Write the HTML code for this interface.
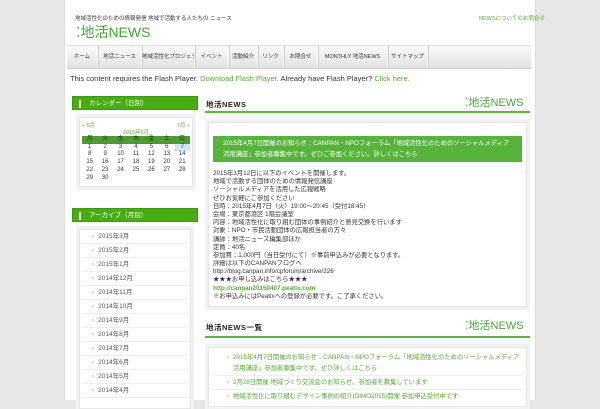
<!DOCTYPE html>
<html><head><meta charset="utf-8"><style>
*{margin:0;padding:0;box-sizing:border-box}
body{width:600px;height:400px;overflow:hidden;background:#e6e6e6;font-family:"Liberation Sans","Noto Sans CJK JP",sans-serif;font-size:7px;color:#333;position:relative}
.wrap{position:absolute;left:64px;top:0;width:472px;height:400px;background:#fff;border-left:1px solid #ddd;border-right:1px solid #ddd}
.a{position:absolute}
a{color:#5aa63a}
.logo{font-size:14px;color:#4aa23a;letter-spacing:0}
.nav{left:67px;top:45px;width:464px;height:24px;background:linear-gradient(#fafafa,#e2e2e2);border-top:1px solid #ddd;border-bottom:1px solid #ccc;display:flex}
.nav div{border-right:1px solid #fff;box-shadow:1px 0 0 #ccc;line-height:22px;font-size:5.5px;color:#333;white-space:nowrap;overflow:hidden;text-align:center;flex:none}
.sh{background:#4bab17;color:#fff;height:14px;line-height:14px;padding-left:16px;font-size:6.5px;border:1px solid #3f9612}
.sh:before{content:"";position:absolute;left:6px;top:3px;width:2px;height:8px;background:#e8f8c8}
.box{background:#fff;border:1px solid #e6e6e6;box-shadow:0 0 0 3px #f2f2f2}
table{border-collapse:collapse;width:100%}
td{text-align:center;font-size:6px;height:7.7px;line-height:7.7px}
.li{height:14px;line-height:14px;border-bottom:1px solid #eee;padding-left:10px;font-size:6.5px;color:#555}
.li:before{content:"›";color:#999;margin-right:4px}
.ttl{font-weight:bold;font-size:7.5px;letter-spacing:.5px;color:#222}
.gl{height:2px;background:#5cb83c}
.txt div{height:8.2px;line-height:8.2px;white-space:nowrap;overflow:hidden}
.nl{padding-left:20px;position:relative;font-size:6.3px}
.nl:before{content:"›";position:absolute;left:14px;color:#999}
</style></head><body>
<div class="wrap"></div>
<div class="a" style="left:75px;top:14px;font-size:5.5px;color:#333">地域活性化のための情報発信 地域で活動する人たちの ニュース</div>
<div class="a logo" style="left:76px;top:22px">⁚地活NEWS</div>
<div class="a" style="left:479px;top:14px;font-size:5.5px"><a>NEWSについてのお問合せ</a></div>
<div class="a nav">
<div style="width:31px">ホーム</div><div style="width:44px">地活ニュース</div><div style="width:53px">地域活性化プロジェクト</div><div style="width:34px">イベント</div><div style="width:29px">活動紹介</div><div style="width:26px">リンク</div><div style="width:34px">お問合せ</div><div style="width:70px">MONTHLY 地活NEWS</div><div style="width:40px">サイトマップ</div>
</div>
<div class="a" style="left:70px;top:74px;font-size:7.5px;color:#333">This content requires the Flash Player. <a>Download Flash Player</a>. Already have Flash Player? <a>Click here.</a></div>

<div class="a sh" style="left:72px;top:96px;width:126px">カレンダー（日別）</div>
<div class="a box" style="left:79px;top:117px;width:114px;height:70px;padding:3px 2px">
<div style="font-size:5.5px;display:flex;justify-content:space-between"><a>« 5月</a><a>7月 »</a></div>
<div style="text-align:center;font-size:5.5px;margin-top:-1px"><a>2015年6月</a></div>
<table><tr style="background:#4e9a33;color:#1a3a10"><td>月</td><td>火</td><td>水</td><td>木</td><td>金</td><td>土</td><td>日</td></tr>
<tr><td>1</td><td>2</td><td>3</td><td>4</td><td>5</td><td>6</td><td style="background:#cde6f8">7</td></tr>
<tr><td>8</td><td>9</td><td>10</td><td>11</td><td>12</td><td>13</td><td>14</td></tr>
<tr><td>15</td><td>16</td><td>17</td><td>18</td><td>19</td><td>20</td><td>21</td></tr>
<tr><td>22</td><td>23</td><td>24</td><td>25</td><td>26</td><td>27</td><td>28</td></tr>
<tr><td>29</td><td>30</td><td></td><td></td><td></td><td></td><td></td></tr></table>
</div>
<div class="a sh" style="left:72px;top:208px;width:126px">アーカイブ（月別）</div>
<div class="a box" style="left:79px;top:229px;width:112px;height:180px;padding:0 2px">
<div class="li">2015年3月</div><div class="li">2015年2月</div><div class="li">2015年1月</div><div class="li">2014年12月</div><div class="li">2014年11月</div><div class="li">2014年10月</div><div class="li">2014年9月</div><div class="li">2014年8月</div><div class="li">2014年7月</div><div class="li">2014年6月</div><div class="li">2014年5月</div><div class="li">2014年4月</div>
</div>

<div class="a ttl" style="left:206px;top:99px">地活NEWS</div>
<div class="a logo" style="left:465px;top:94px;font-size:11px">⁚地活NEWS</div>
<div class="a gl" style="left:205px;top:111px;width:325px"></div>
<div class="a box" style="left:208px;top:122px;width:319px;height:185px;padding:0 4px">
<div style="background:#58b33c;margin-top:13px;height:26px;padding:2px 10px;font-size:6.3px;line-height:11px;overflow:hidden"><a style="color:#fff">2015年4月7日開催のお知らせ：CANPAN・NPOフォーラム「地域活性化のためのソーシャルメディア活用講座」参加者募集中です。ぜひご参加ください。詳しくはこちら</a></div>
<div class="txt" style="margin-top:8px;font-size:6.3px">
<div>2015年3月12日に以下のイベントを開催します。</div>
<div>地域で活動する団体のための情報発信講座</div>
<div>ソーシャルメディアを活用した広報戦略</div>
<div>ぜひお気軽にご参加ください</div>
<div>日時：2015年4月7日（火）19:00～20:45（受付18:45）</div>
<div>会場：東京都港区 1階会議室</div>
<div>内容：地域活性化に取り組む団体の事例紹介と意見交換を行います</div>
<div>対象：NPO・市民活動団体の広報担当者の方々</div>
<div>講師：地活ニュース編集部ほか</div>
<div>定員：40名</div>
<div>参加費：1,000円（当日受付にて）※事前申込みが必要となります。</div>
<div>詳細は以下のCANPANブログへ</div>
<div>http://blog.canpan.info/cpforum/archive/226</div>
<div>★★★お申し込みはこちら★★★</div>
<div><a style="font-weight:bold">http://canpan20150407.peatix.com</a></div>
<div>※お申込みにはPeatixへの登録が必要です。ご了承ください。</div>
</div></div>

<div class="a ttl" style="left:206px;top:322px">地活NEWS一覧</div>
<div class="a logo" style="left:465px;top:317px;font-size:11px">⁚地活NEWS</div>
<div class="a gl" style="left:205px;top:336px;width:325px"></div>
<div class="a box" style="left:208px;top:347px;width:319px;height:60px;padding:4px 4px">
<div class="nl" style="line-height:11px;border-bottom:1px solid #eee;padding-bottom:1px"><a>2015年4月7日開催のお知らせ：CANPAN・NPOフォーラム「地域活性化のためのソーシャルメディア活用講座」参加者募集中です。ぜひ詳しくはこちら</a></div>
<div class="nl" style="line-height:13px;border-bottom:1px solid #eee"><a>2月28日開催 地域づくり交流会のお知らせ。参加者を募集しています</a></div>
<div class="nl" style="line-height:13px"><a>地域活性化に取り組むデザイン事例の紹介(DIMO2015)開催 参加申込受付中です</a></div>
</div>
</body></html>
